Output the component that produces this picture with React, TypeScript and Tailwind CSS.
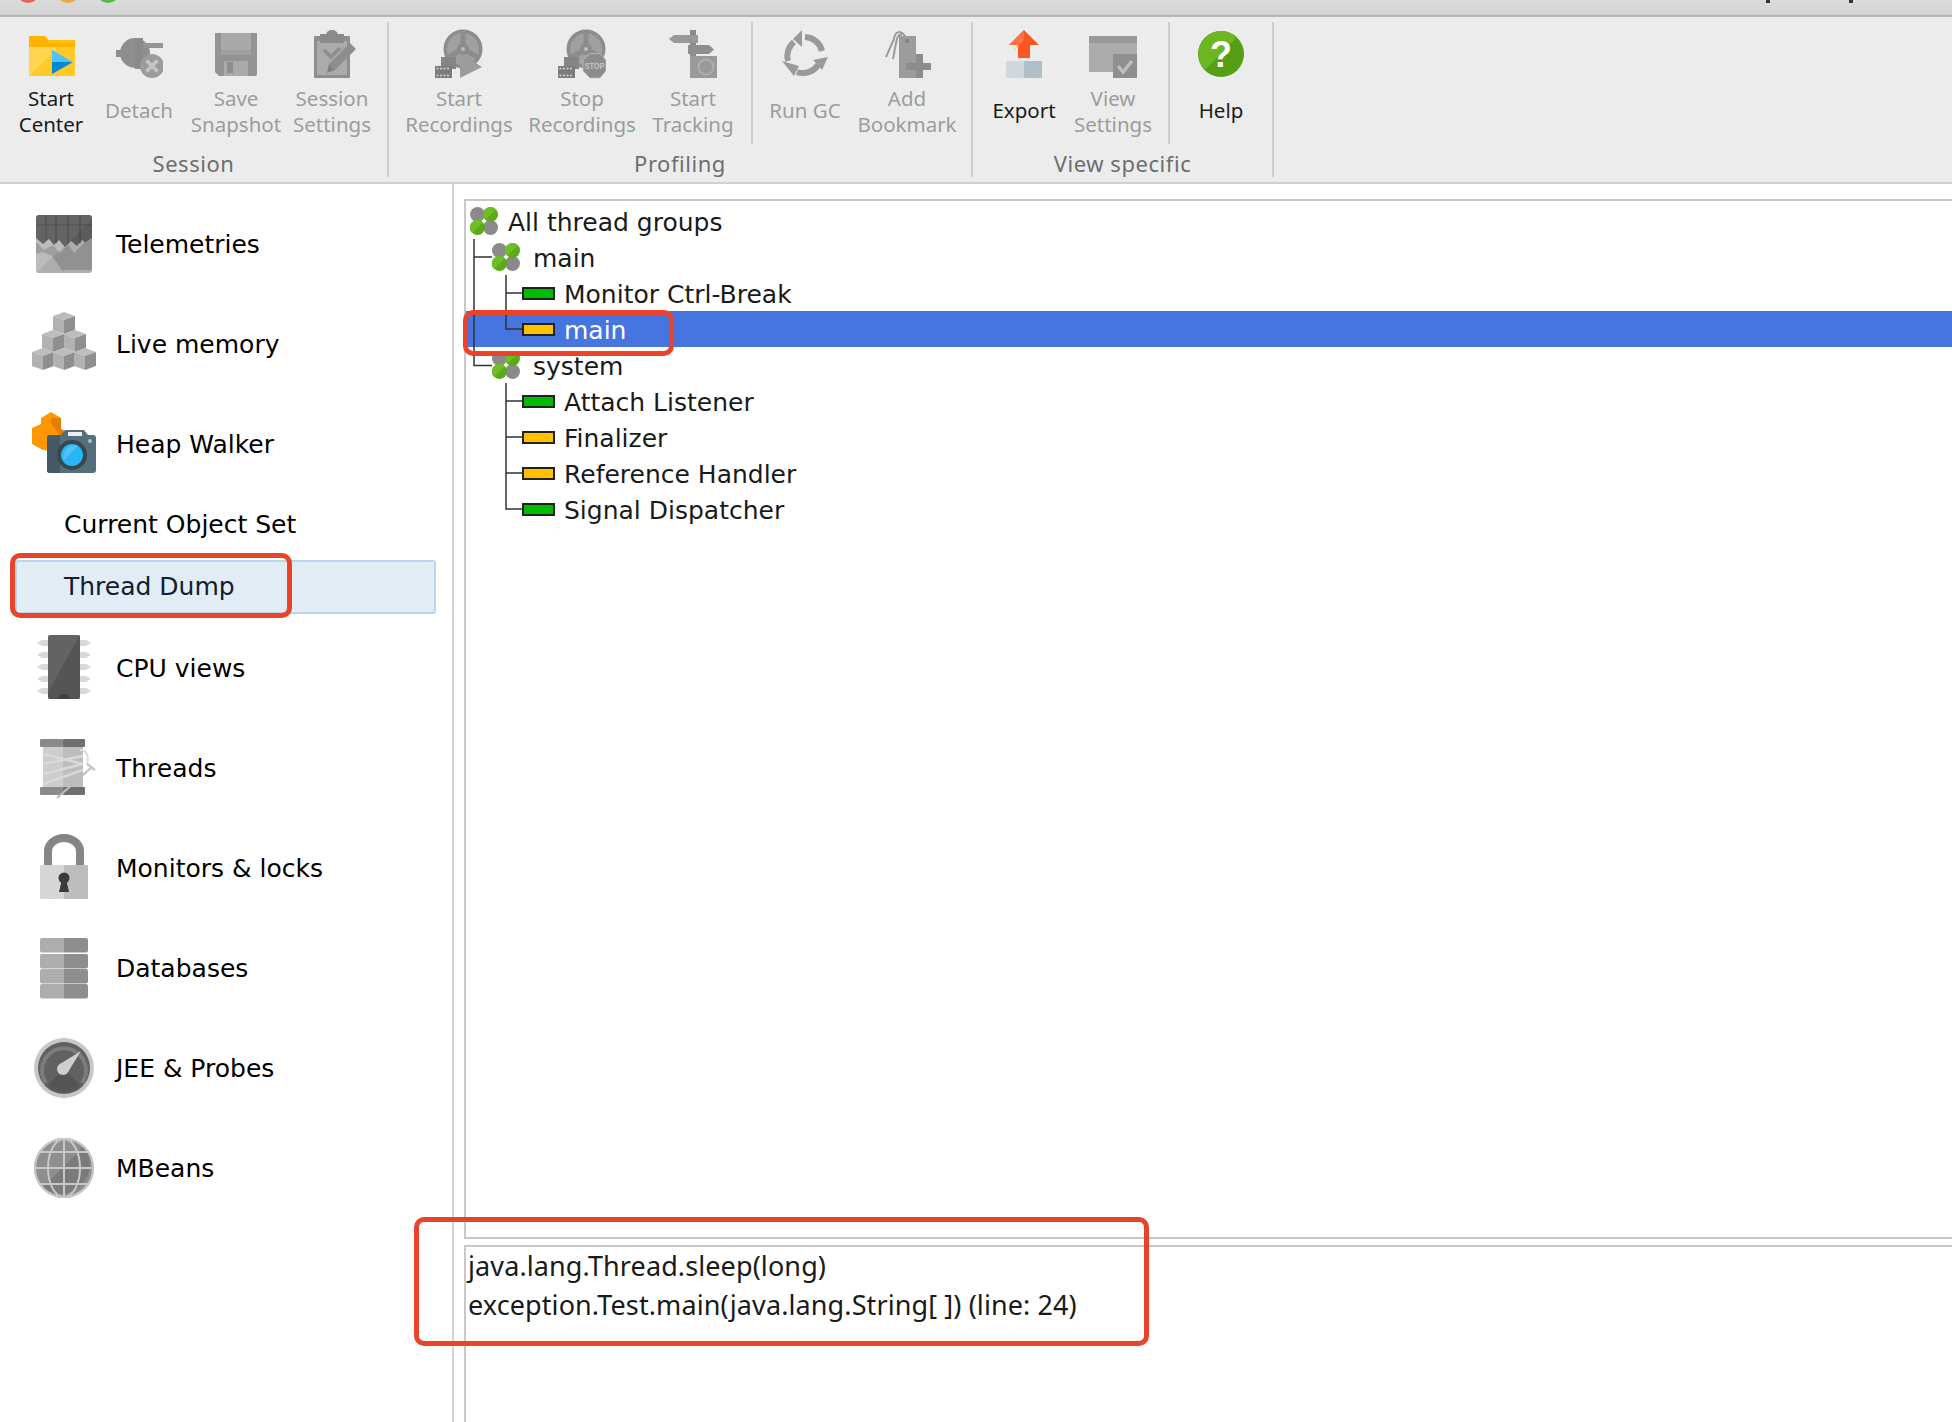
const narrow = "font-['Noto_Sans',sans-serif]";
const wide = "font-['DejaVu_Sans',sans-serif]";

function FolderIcon() {
  return (
    <svg viewBox="0 0 48 50" className="w-[48px] h-[50px]">
      <path d="M2 18h46v29H2z" fill="#ffd54f" />
      <path d="M2 47L32 18h16v29z" fill="#ffca28" />
      <path d="M2 7h16l3 4h27v7H2z" fill="#ffb300" />
      <path d="M21 11h27v3H21z" fill="#ffc107" />
      <path d="M25 21l21 12H25z" fill="#4fc3f7" />
      <path d="M25 33h21l-21 12z" fill="#0288d1" />
    </svg>
  );
}

function DetachIcon() {
  return (
    <svg viewBox="0 0 48 50" className="w-[48px] h-[50px]">
      <path d="M1 21h5v7H1z" fill="#8e8e8e" />
      <circle cx="20" cy="24" r="15" fill="#8e8e8e" />
      <path d="M20 9h8v31h-8z" fill="#8a8a8a" />
      <path d="M28 14h19a2.500 2.500 0 0 1 0 5H28z" fill="#949494" />
      <circle cx="37" cy="37" r="12" fill="#9c9c9c" />
      <path d="M31.500 31.500l11 11M42.500 31.500l-11 11" stroke="#c6c6c6" strokeWidth="3.500" />
    </svg>
  );
}

function SaveIcon() {
  return (
    <svg viewBox="0 0 48 50" className="w-[48px] h-[50px]">
      <path d="M3 4h42v41a2 2 0 0 1-2 2H7l-4-4z" fill="#939393" />
      <path d="M9 4h30v22H9z" fill="#a9a9a9" />
      <path d="M9 21h30v5H9z" fill="#9e9e9e" />
      <path d="M12 32h24v15H12z" fill="#aaa" />
      <path d="M15 33h6v11h-6z" fill="#8d8d8d" />
    </svg>
  );
}

function SessionIcon() {
  return (
    <svg viewBox="0 0 48 50" className="w-[48px] h-[50px]">
      <rect x="6" y="7" width="36" height="42" rx="1" fill="#8f8f8f" />
      <rect x="9" y="12" width="30" height="34" fill="#ababab" />
      <path d="M12 5h24v9H12z" fill="#8a8a8a" />
      <path d="M18 6a6 5 0 0 1 12 0z" fill="#8a8a8a" />
      <path d="M16 21l7 7 9-9" stroke="#8e8e8e" strokeWidth="3.500" fill="none" />
      <path d="M42 14l6 6-21 21-6-6z" fill="#8e8e8e" />
      <path d="M21 35l6 6-8 3z" fill="#808080" />
    </svg>
  );
}

function ReelIcon({ stop }: { stop?: boolean }) {
  return (
    <svg viewBox="0 0 48 50" className="w-[48px] h-[50px]">
      <circle cx="28" cy="20" r="19.500" fill="#8c8c8c" />
      <circle cx="28" cy="20" r="16" fill="#a0a0a0" />
      <path d="M28 20V2M28 20L12 29M28 20l16 9" stroke="#8c8c8c" strokeWidth="5" />
      <circle cx="28" cy="20" r="6" fill="#8c8c8c" />
      <circle cx="28" cy="20" r="2" fill="#bdbdbd" />
      <rect x="6" y="28" width="15" height="12" fill="#858585" />
      <rect x="0" y="37" width="17" height="12" fill="#7c7c7c" />
      <path d="M1.500 39.500h14M1.500 46.500h14" stroke="#d5d5d5" strokeWidth="1.500" strokeDasharray="2 1.500" />
      {stop ? (
        <>
          <path d="M32 24.500h10l6 6.500v11l-6 7H32l-7-7V31z" fill="#8c8c8c" stroke="#c4c4c4" strokeWidth="0.800" />
          <text x="36.500" y="40" textAnchor="middle" fontSize="8.500" textLength="20" lengthAdjust="spacingAndGlyphs" fontWeight="700" fill="#c6c6c6" fontFamily="Liberation Sans, sans-serif">STOP</text>
        </>
      ) : (
        <path d="M25 24l22 14-22 11z" fill="#9c9c9c" />
      )}
    </svg>
  );
}

function TrackIcon() {
  return (
    <svg viewBox="0 0 48 50" className="w-[48px] h-[50px]">
      <path d="M21 1h6v26h-6z" fill="#8a8a8a" />
      <path d="M5 6h24v8H5L0 10z" fill="#999" />
      <path d="M19 16h21l5 4.500-5 4.500H19z" fill="#8e8e8e" />
      <rect x="21" y="27" width="27" height="22" fill="#9a9a9a" />
      <circle cx="37" cy="38" r="7.500" fill="none" stroke="#b0b0b0" strokeWidth="1.800" />
    </svg>
  );
}

function GcIcon() {
  return (
    <svg viewBox="0 0 48 50" className="w-[48px] h-[50px]">
      <path d="M7 32a18 18 0 0 1 6-19" fill="none" stroke="#9a9a9a" strokeWidth="6" />
      <path d="M1 34l17 5-5 10z" fill="#9a9a9a" transform="translate(0 -2)" />
      <path d="M24 8a18 18 0 0 1 17 14" fill="none" stroke="#9a9a9a" strokeWidth="6" />
      <path d="M21 1v17l-9-8z" fill="#9a9a9a" />
      <path d="M37 36a18 18 0 0 1-21 7" fill="none" stroke="#9a9a9a" strokeWidth="6" />
      <path d="M47 28l-15 3 9 10z" fill="#9a9a9a" />
    </svg>
  );
}

function BookmarkIcon() {
  return (
    <svg viewBox="0 0 48 50" className="w-[48px] h-[50px]">
      <path d="M16 7h17v42H16z" fill="#9c9c9c" />
      <circle cx="24" cy="12" r="2" fill="#808080" />
      <path d="M23 9C18 0 12 2 11 10L3 28M19 6C15 4 14 10 13 14L10 30" fill="none" stroke="#9c9c9c" strokeWidth="2" />
      <path d="M23 34h25v7H23zM33 25h7v24h-7z" fill="#8c8c8c" />
    </svg>
  );
}

function ExportIcon() {
  return (
    <svg viewBox="0 0 48 50" className="w-[48px] h-[50px]">
      <path d="M24 1l15 15h-9v13H18V16H9z" fill="#ff5722" />
      <path d="M24 1v10L14 21l4-5H9z" fill="#ff7043" />
      <rect x="6" y="32" width="18" height="17" rx="1" fill="#cfd8dc" />
      <rect x="24" y="32" width="18" height="17" rx="1" fill="#b0bec5" />
    </svg>
  );
}

function ViewSettingsIcon() {
  return (
    <svg viewBox="0 0 48 50" className="w-[48px] h-[50px]">
      <rect x="0" y="7" width="48" height="36" fill="#ababab" />
      <rect x="0" y="7" width="48" height="7" fill="#989898" />
      <rect x="24" y="25" width="24" height="24" fill="#8f8f8f" />
      <path d="M29 37l5 6 9-11" fill="none" stroke="#bdbdbd" strokeWidth="3.500" />
    </svg>
  );
}

function HelpIcon() {
  return (
    <svg viewBox="0 0 48 50" className="w-[48px] h-[50px]">
      <circle cx="24" cy="25" r="23" fill="#549f14" />
      <path d="M8 41A23 23 0 0 1 40 8z" fill="#6cb721" />
      <text x="24" y="38" textAnchor="middle" fontSize="36" fontWeight="700" fill="#fff" fontFamily="Liberation Sans, sans-serif">?</text>
    </svg>
  );
}

function TelemetryIcon() {
  return (
    <svg viewBox="0 0 64 64" className="w-16 h-16">
      <rect x="4" y="3" width="56" height="58" rx="3" fill="#bcbcbc" />
      <path d="M4 6a3 3 0 0 1 3-3h50a3 3 0 0 1 3 3v20l-6 5-4-3-5 6-6-5-6 6-6-7-5 5-5-6-6 5-7-6z" fill="#646464" />
      <path d="M4 13h56M14 3v24M24 3v28M36 3v28M48 3v28" stroke="#4e4e4e" strokeWidth="1.200" />
      <path d="M4 30l8 8 9-5 7 8 8-9 6 9 6-6 4-4 8-5v32H30l-10-14-9-4-7 2z" fill="#9e9e9e" />
      <path d="M4 61L60 8v50a3 3 0 0 1-3 3z" fill="#000" opacity="0.08" />
    </svg>
  );
}

function Cube({ x, y, c1, c2, c3 }: { x: number; y: number; c1: string; c2: string; c3: string }) {
  return (
    <g transform={`translate(${x} ${y})`}>
      <path d="M0 4l11-4 11 4-11 4z" fill={c1} />
      <path d="M0 4l11 4v14L0 18z" fill={c2} />
      <path d="M22 4L11 8v14l11-4z" fill={c3} />
    </g>
  );
}

function MemoryIcon() {
  const c = { c1: "#bdbdbd", c2: "#b2b2b2", c3: "#8f8f8f" };
  return (
    <svg viewBox="0 0 64 64" className="w-16 h-16">
      <Cube x={21} y={0} {...c} />
      <Cube x={10} y={18} {...c} />
      <Cube x={32} y={18} {...c} />
      <Cube x={0} y={36} {...c} />
      <Cube x={21} y={36} {...c} />
      <Cube x={42} y={36} {...c} />
    </svg>
  );
}

function HeapIcon() {
  return (
    <svg viewBox="0 0 64 64" className="w-16 h-16">
      <path d="M9 6l10-6 10 6v11l9 5v12l-8 6-19-2-11-6V16l9-4z" fill="#ff9800" />
      <path d="M19 12V6l10 0v11l9 5v6l-10-5z" fill="#e67c00" />
      <path d="M15 26a3 3 0 0 1 3-3h11l4-5h19l4 5h5a3 3 0 0 1 3 3v32a3 3 0 0 1-3 3H18a3 3 0 0 1-3-3z" fill="#546e7a" />
      <path d="M15 26a3 3 0 0 1 3-3h10v38H18a3 3 0 0 1-3-3z" fill="#455a64" />
      <rect x="36" y="20" width="14" height="4" fill="#eceff1" />
      <circle cx="40" cy="43" r="15" fill="#37474f" />
      <circle cx="40" cy="43" r="11" fill="#29b6f6" />
      <path d="M32 48a11 11 0 0 1 14-14z" fill="#4fc3f7" />
      <circle cx="58" cy="29" r="2" fill="#b0bec5" />
    </svg>
  );
}

function CpuIcon() {
  return (
    <svg viewBox="0 0 64 64" className="w-16 h-16 overflow-visible">
      {[7, 19, 31, 43, 55].map((y) => (
        <path key={y} d="M10 -3h44l5 3-5 3H10L5 0z" transform={`translate(0 ${y})`} fill="#d8d8d8" />
      ))}
      <rect x="16" y="-1" width="32" height="64" rx="2" fill="#636363" />
      <path d="M16 56L48 -1v62a2 2 0 0 1-2 2H18a2 2 0 0 1-2-2z" fill="#555" />
      <path d="M26 63a6 5 0 0 1 12 0z" fill="#424242" />
    </svg>
  );
}

function SpoolIcon() {
  return (
    <svg viewBox="0 0 64 64" className="w-16 h-16">
      <rect x="11" y="10" width="20" height="42" fill="#cdcdcd" />
      <rect x="31" y="10" width="20" height="42" fill="#bdbdbd" />
      <path d="M11 18l40 10M11 28l40-8M11 38l40-10M11 48l40-14" stroke="#d9d9d9" strokeWidth="2.500" />
      <rect x="8" y="3" width="23" height="8" rx="1" fill="#8a8a8a" />
      <rect x="31" y="3" width="22" height="8" rx="1" fill="#6f6f6f" />
      <rect x="8" y="51" width="23" height="8" rx="1" fill="#8a8a8a" />
      <rect x="31" y="51" width="22" height="8" rx="1" fill="#6f6f6f" />
      <path d="M48 14c7 0 9 6 7 14" fill="none" stroke="#dedede" strokeWidth="2" />
      <path d="M25 62L60 31" stroke="#bdbdbd" strokeWidth="2" />
      <path d="M55 28l8 6" stroke="#c4c4c4" strokeWidth="2.500" />
    </svg>
  );
}

function LockIcon() {
  return (
    <svg viewBox="0 0 64 64" className="w-16 h-16 overflow-visible">
      <path d="M16 30V15a16 13 0 0 1 32 0v15" fill="none" stroke="#858585" strokeWidth="8" />
      <rect x="8" y="29" width="24" height="34" rx="1" fill="#d6d6d6" />
      <rect x="32" y="29" width="24" height="34" rx="1" fill="#bdbdbd" />
      <circle cx="32" cy="42" r="5.500" fill="#3a3a3a" />
      <path d="M30 43h4l3 13H27z" fill="#3a3a3a" />
    </svg>
  );
}

function DbIcon() {
  return (
    <svg viewBox="0 0 64 64" className="w-16 h-16">
      {[2, 18, 33, 48].map((y) => (
        <g key={y}>
          <path d={`M8 ${y + 2}a2 2 0 0 1 2-2h22v14.500H10a2 2 0 0 1-2-2z`} fill="#adadad" />
          <path d={`M32 ${y}h22a2 2 0 0 1 2 2v10.500a2 2 0 0 1-2 2H32z`} fill="#8e8e8e" />
        </g>
      ))}
    </svg>
  );
}

function GaugeIcon() {
  return (
    <svg viewBox="0 0 64 64" className="w-16 h-16">
      <circle cx="32" cy="32" r="30" fill="#c8c8c8" />
      <circle cx="32" cy="32" r="26" fill="#616161" />
      <path d="M14 47A22 22 0 1 1 50 47" fill="none" stroke="#7c7c7c" strokeWidth="4" />
      <path d="M16 50A24 24 0 0 0 48 50L32 32z" fill="#555" />
      <path d="M28 28l21-13-13 21z" fill="#cfcfcf" />
      <circle cx="31" cy="33" r="6" fill="#cfcfcf" />
    </svg>
  );
}

function GlobeIcon() {
  return (
    <svg viewBox="0 0 64 64" className="w-16 h-16">
      <circle cx="32" cy="32" r="30" fill="#8e8e8e" />
      <path d="M10 52L52 10a30 30 0 0 1-42 42z" fill="#7b7b7b" />
      <g fill="none" stroke="#c8c8c8" strokeWidth="2">
        <circle cx="32" cy="32" r="29" />
        <ellipse cx="32" cy="32" rx="16" ry="29" />
        <path d="M32 3v58M3 32h58M8 16h48M8 48h48" />
      </g>
    </svg>
  );
}

function GroupIcon() {
  return (
    <svg viewBox="0 0 28 28" className="w-7 h-7 shrink-0">
      <circle cx="7.500" cy="7.500" r="7.500" fill="#8a8a8a" />
      <circle cx="20.500" cy="20.500" r="7.500" fill="#8a8a8a" />
      <circle cx="20.500" cy="7.500" r="7.500" fill="#5ca91a" />
      <circle cx="7.500" cy="20.500" r="7.500" fill="#5ca91a" />
      <path d="M15.200 13A7.500 7.500 0 0 1 26 2.500zM2 26A7.500 7.500 0 0 1 13 15.200z" fill="#6fbe26" />
    </svg>
  );
}

function ThreadBar({ color }: { color: string }) {
  return <div className={`w-[33px] h-[13px] border-2 border-[#222] shrink-0 ${color}`} />;
}

const tools = [
  [
    { w: "w-[102px]", l: ["Start", "Center"], icon: <FolderIcon />, on: true },
    { w: "w-[74px]", l: ["Detach"], icon: <DetachIcon /> },
    { w: "w-[120px]", l: ["Save", "Snapshot"], icon: <SaveIcon /> },
    { w: "w-[72px]", l: ["Session", "Settings"], icon: <SessionIcon /> },
  ],
  [
    { w: "w-[140px]", l: ["Start", "Recordings"], icon: <ReelIcon /> },
    { w: "w-[106px]", l: ["Stop", "Recordings"], icon: <ReelIcon stop /> },
    { w: "w-[116px]", l: ["Start", "Tracking"], icon: <TrackIcon /> },
  ],
  [
    { w: "w-[104px]", l: ["Run GC"], icon: <GcIcon /> },
    { w: "w-[100px]", l: ["Add", "Bookmark"], icon: <BookmarkIcon /> },
  ],
  [
    { w: "w-[102px]", l: ["Export"], icon: <ExportIcon />, on: true },
    { w: "w-[76px]", l: ["View", "Settings"], icon: <ViewSettingsIcon /> },
  ],
  [{ w: "w-[102px]", l: ["Help"], icon: <HelpIcon />, on: true }],
];

function Tool({ t }: { t: (typeof tools)[number][number] }) {
  return (
    <div className={`${t.w} flex flex-col items-center shrink-0`}>
      {t.icon}
      <div
        className={`h-[52px] mt-[6px] flex flex-col justify-center items-center whitespace-nowrap text-[20.5px] leading-[26px] ${
          t.l.length === 1 ? "pb-[3px]" : ""
        } ${t.on ? "text-[#1a1a1a]" : "text-[#9c9c9c]"}`}
      >
        {t.l.map((s) => (
          <span key={s}>{s}</span>
        ))}
      </div>
    </div>
  );
}

function Toolbar() {
  const sep = "w-[2px] bg-[#cdcdcd] shrink-0 my-[5px]";
  const inner = "w-[2px] bg-[#cdcdcd] shrink-0 h-[122px] -mt-[7px] -mb-[7px]";
  const label = "text-[22px] leading-[26px] mt-[13px] text-[#6e6e6e] tracking-wide";
  return (
    <div className={`h-[167px] bg-[#ececec] border-b-2 border-[#d0d0d0] flex text-center ${narrow}`}>
      <div className="w-[387px] shrink-0 flex flex-col">
        <div className="flex pt-3">
          {tools[0].map((t) => (
            <Tool key={t.l[0] + t.w} t={t} />
          ))}
        </div>
        <div className={label}>Session</div>
      </div>
      <div className={sep} />
      <div className="w-[582px] shrink-0 flex flex-col">
        <div className="flex pt-3">
          {tools[1].map((t) => (
            <Tool key={t.l[0] + t.w} t={t} />
          ))}
          <div className={inner} />
          {tools[2].map((t) => (
            <Tool key={t.l[0] + t.w} t={t} />
          ))}
        </div>
        <div className={label}>Profiling</div>
      </div>
      <div className={sep} />
      <div className="w-[299px] shrink-0 flex flex-col">
        <div className="flex pt-3">
          {tools[3].map((t) => (
            <Tool key={t.l[0] + t.w} t={t} />
          ))}
          <div className="w-[17px] shrink-0" />
          <div className={inner} />
          {tools[4].map((t) => (
            <Tool key={t.l[0] + t.w} t={t} />
          ))}
        </div>
        <div className={label}>View specific</div>
      </div>
      <div className={sep} />
    </div>
  );
}

function NavItem({ icon, label }: { icon: React.ReactNode; label: string }) {
  return (
    <div className="h-[100px] flex items-center pl-8 gap-5 text-[25px]">
      {icon}
      <span className="pt-[2px]">{label}</span>
    </div>
  );
}

function Sidebar() {
  return (
    <div className={`w-[454px] shrink-0 border-r-2 border-[#d4d4d4] pt-[10px] text-black ${wide}`}>
      <NavItem icon={<TelemetryIcon />} label="Telemetries" />
      <NavItem icon={<MemoryIcon />} label="Live memory" />
      <NavItem icon={<HeapIcon />} label="Heap Walker" />
      <div className="h-[60px] flex items-center pl-16 pt-[2px] text-[25px]">Current Object Set</div>
      <div className="h-[54px] mx-[15px] mt-[6px] mb-[4px] pl-[47px] w-[421px] flex items-center text-[25px] text-[#0f2030] bg-[#e2ecf5] border-2 border-[#bcd5ea] rounded-[3px]">
        Thread Dump
      </div>
      <NavItem icon={<CpuIcon />} label="CPU views" />
      <NavItem icon={<SpoolIcon />} label="Threads" />
      <NavItem icon={<LockIcon />} label="Monitors & locks" />
      <NavItem icon={<DbIcon />} label="Databases" />
      <NavItem icon={<GaugeIcon />} label="JEE & Probes" />
      <NavItem icon={<GlobeIcon />} label="MBeans" />
    </div>
  );
}

const rows = [
  { label: "Monitor Ctrl-Break", color: "bg-[#00bb00]" },
  { label: "main", color: "bg-[#ffc000]", selected: true },
  { label: "", group: "system" },
  { label: "Attach Listener", color: "bg-[#00bb00]" },
  { label: "Finalizer", color: "bg-[#ffc000]" },
  { label: "Reference Handler", color: "bg-[#ffc000]" },
  { label: "Signal Dispatcher", color: "bg-[#00bb00]" },
];

function ThreadTree() {
  return (
    <div className={`relative pt-[2px] text-[25px] text-[#1a1a1a] ${wide}`}>
      <svg className="absolute left-0 top-[2px] z-10 w-[60px] h-[312px]" viewBox="0 0 60 312" fill="none" stroke="#333" strokeWidth="1.500">
        <path d="M8 36V162.500H26M8 54H26" />
        <path d="M40 72V126H56M40 90H56" />
        <path d="M40 180V306H56M40 198H56M40 234H56M40 270H56" />
      </svg>
      <div className="h-9 flex items-center pl-[4px]">
        <GroupIcon />
        <span className="ml-[10px] pt-[3px]">All thread groups</span>
      </div>
      <div className="h-9 flex items-center pl-[26px]">
        <GroupIcon />
        <span className="ml-[13px] pt-[3px]">main</span>
      </div>
      {rows.map((r, i) =>
        r.group ? (
          <div key={i} className="h-9 flex items-center pl-[26px]">
            <GroupIcon />
            <span className="ml-[13px] pt-[3px]">{r.group}</span>
          </div>
        ) : (
          <div key={i} className={`h-9 flex items-center pl-[56px] ${r.selected ? "bg-[#4675e0] text-white" : ""}`}>
            <ThreadBar color={r.color ?? ""} />
            <span className="ml-[9px] pt-[3px]">{r.label}</span>
          </div>
        ),
      )}
    </div>
  );
}

function Callout({ className }: { className: string }) {
  return <div className={`absolute border-[5px] border-[#e9432a] rounded-[10px] z-20 pointer-events-none ${className}`} />;
}

export default function App() {
  return (
    <div className="relative w-[1952px] h-[1422px] overflow-hidden bg-white flex flex-col">
      <div className="h-[17px] shrink-0 bg-linear-to-b from-[#dcdcdc] to-[#d2d2d2] border-b-2 border-[#b6b6b6] relative overflow-hidden">
        <div className="absolute left-[16px] -top-[21px] flex gap-[16px]">
          <div className="w-6 h-6 rounded-full bg-[#e8635b]" />
          <div className="w-6 h-6 rounded-full bg-[#eaaa3f]" />
          <div className="w-6 h-6 rounded-full bg-[#57b84c]" />
        </div>
        <div className="absolute left-[1766px] top-0 w-[4px] h-[3px] bg-[#333]" />
        <div className="absolute left-[1849px] top-0 w-[4px] h-[3px] bg-[#333]" />
      </div>
      <Toolbar />
      <div className="flex-1 flex min-h-0">
        <Sidebar />
        <div className="flex-1 min-w-0 pt-[15px] pl-[10px] flex flex-col gap-[6px]">
          <div className="h-[1040px] border-l-2 border-t-2 border-b-2 border-[#c8c8c8]">
            <ThreadTree />
          </div>
          <div className={`flex-1 border-l-2 border-t-2 border-[#c8c8c8] pl-[2px] text-[27px] leading-[38.5px] tracking-[0.1px] text-[#1a1a1a] ${narrow}`}>
            <div>java.lang.Thread.sleep(long)</div>
            <div>exception.Test.main(java.lang.String[ ]) (line: 24)</div>
          </div>
        </div>
      </div>
      <Callout className="left-[10px] top-[553px] w-[282px] h-[65px]" />
      <Callout className="left-[463px] top-[310px] w-[211px] h-[46px]" />
      <Callout className="left-[414px] top-[1217px] w-[735px] h-[129px]" />
    </div>
  );
}
